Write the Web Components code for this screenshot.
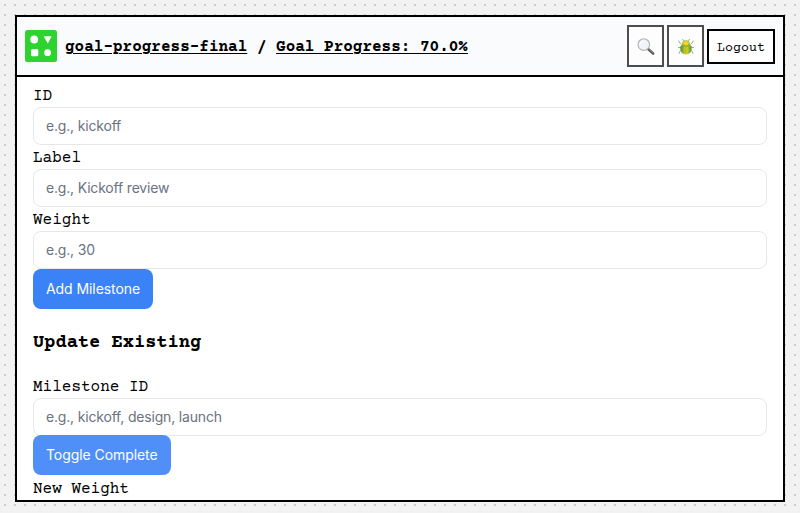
<!DOCTYPE html>
<html lang="en">
<head>
<meta charset="utf-8">
<title>Goal Progress</title>
<style>
html,body{margin:0;height:100%}
body{box-sizing:border-box;padding:15px 15px 11px;overflow:hidden;color:#000;
font-family:"Courier Prime","Courier New","Liberation Mono",monospace;font-size:16px;line-height:24px;
background:conic-gradient(from 90deg at 8px 8px,#ccc 25%,#f2f2f2 0) 6px 6px/10px 10px}
</style>
</head>
<body>
<app-window>
  <window-header slot="header">
    <app-logo slot="logo"></app-logo>
    <a slot="title">goal-progress-final</a>
    <a slot="subtitle">Goal Progress: 70.0%</a>
    <tool-button slot="actions" icon><search-icon></search-icon></tool-button>
    <tool-button slot="actions" icon><bug-icon></bug-icon></tool-button>
    <tool-button slot="actions">Logout</tool-button>
  </window-header>
  <form-field label="ID" hint="e.g., kickoff"></form-field>
  <form-field label="Label" hint="e.g., Kickoff review"></form-field>
  <form-field label="Weight" hint="e.g., 30"></form-field>
  <action-button>Add Milestone</action-button>
  <section-title>Update Existing</section-title>
  <form-field label="Milestone ID" hint="e.g., kickoff, design, launch"></form-field>
  <action-button active>Toggle Complete</action-button>
  <form-field label="New Weight" hint=""></form-field>
</app-window>
<script>
function define(name, html) {
  customElements.define(name, class extends HTMLElement {
    constructor() {
      super();
      this.attachShadow({mode: 'open'}).innerHTML = html;
    }
  });
}
define('app-window', `<style>
:host{display:flex;flex-direction:column;box-sizing:border-box;height:100%;border:2px solid #000;background:#fff;overflow:hidden}
main{flex:1;min-height:0;overflow:hidden;padding:6px 16px 0;display:flex;flex-direction:column;align-items:flex-start}
::slotted(*){flex:none}
</style><slot name="header"></slot><main><slot></slot></main>`);
define('window-header', `<style>
:host{display:flex;align-items:center;box-sizing:border-box;height:60px;padding:0 8px;border-bottom:2px solid #000;background:#f9fbfd}
.title{flex:1;display:flex;gap:9.6px;margin-left:8px;padding-top:2px;font-weight:700;white-space:nowrap}
.actions{display:flex;align-items:center;gap:3px}
::slotted(a){text-decoration:underline;text-decoration-thickness:1px;text-underline-offset:2px}
</style><slot name="logo"></slot><div class="title"><slot name="title"></slot><span>/</span><slot name="subtitle"></slot></div><div class="actions"><slot name="actions"></slot></div>`);
define('app-logo', `<style>:host{display:block;width:32px;height:32px}svg{display:block}</style>
<svg width="32" height="32" viewBox="0 0 32 32"><rect width="32" height="32" rx="2.5" fill="#2fd32f"/><g fill="#fff"><circle cx="9.2" cy="9.5" r="3.9"/><path d="M18.7 6.2h8L22.8 13.6z"/><rect x="6" y="19" width="7.3" height="7.2" rx="1.5"/><circle cx="22.6" cy="22.7" r="3.4"/></g></svg>`);
define('tool-button', `<style>
:host{display:flex;align-items:center;justify-content:center;box-sizing:border-box;width:68px;height:35px;padding-top:4px;border:2px solid #000;background:#fff;font-size:13.333px;line-height:15px}
:host([icon]){width:37px;height:42px;padding:1px 0 0;border-color:#4d4d4d;background:#fdfdfe}
</style><slot></slot>`);
define('search-icon', `<style>:host,svg{display:block}</style>
<svg width="18" height="18" viewBox="0 0 18 18"><path d="M11.4 11.2l4.7 4.3" stroke="#606060" stroke-width="2.6" stroke-linecap="round"/><path d="M11.9 11l4 3.6" stroke="#8b8b8b" stroke-width=".8"/><circle cx="6.8" cy="6.6" r="5.8" fill="#f1f3f9" stroke="#b0b0b0" stroke-width="1.1"/><path d="M3.2 6a3.8 3.8 0 0 1 3-3" stroke="#fff" fill="none"/></svg>`);
define('bug-icon', `<style>:host,svg{display:block}</style>
<svg width="18" height="18" viewBox="0 0 18 18"><defs><linearGradient id="g"><stop stop-color="#43882a"/><stop offset=".35" stop-color="#b5c52c"/><stop offset=".55" stop-color="#e5d52c"/><stop offset="1" stop-color="#43952d"/></linearGradient></defs><g fill="none" stroke="#93b490" stroke-width="1"><path d="M6.6 3.2L5.5 1M11.4 3.2L12.5 1M4.6 6.5L2.8 5 1.6 2.6M13.4 6.5l1.8-1.5 1.2-2.4M4 9.5H1M14 9.5h3M4.8 12L2.8 13.4l-.8 2.4M13.2 12l2 1.4.8 2.4"/></g><path d="M3.5 8Q9 5.2 14.5 8q.8 5.8-2.6 7.8Q9 17 6.1 15.8 2.7 13.8 3.5 8z" fill="url(#g)"/><path d="M4.9 6.8Q5.2 2.2 9 2.2t4.1 4.6Q9 9 4.9 6.8z" fill="#a0b52a"/><ellipse cx="9" cy="5.1" rx="2.8" ry="2.1" fill="#f4d12d"/><path d="M4.2 7.6q4.8 1.7 9.6 0M9 8.7v7" fill="none" stroke="#6f912a" stroke-width=".5"/></svg>`);
define('action-button', `<style>
:host{display:flex;align-items:center;box-sizing:border-box;height:40px;padding:0 13px;border-radius:8px;background:#3b82f6;color:#fff;font:400 14px/20px Inter,sans-serif;letter-spacing:-.07px}
:host([active]){background:#4f8ff7;margin:-1px 0 1px}
</style><slot></slot>`);
define('section-title', `<style>
:host{display:block}h3{margin:22px 0 19px;font-size:18.72px;line-height:24px}
</style><h3><slot></slot></h3>`);
customElements.define('form-field', class extends HTMLElement {
  connectedCallback() {
    this.attachShadow({mode: 'open'}).innerHTML = `<style>
:host{display:block;width:100%}label{display:block;padding-top:2px;line-height:22px}
input{display:block;box-sizing:border-box;width:100%;height:38px;margin:0;padding:0 12px 2px;border:1px solid #e5e7eb;border-radius:8px;background:#fff;font:400 14px/20px Inter,sans-serif;letter-spacing:-.18px;outline:0}
input::placeholder{color:#6b7280;opacity:1}
</style><label></label><input>`;
    this.shadowRoot.querySelector('label').textContent = this.getAttribute('label');
    this.shadowRoot.querySelector('input').placeholder = this.getAttribute('hint');
  }
});
</script>
</body>
</html>
